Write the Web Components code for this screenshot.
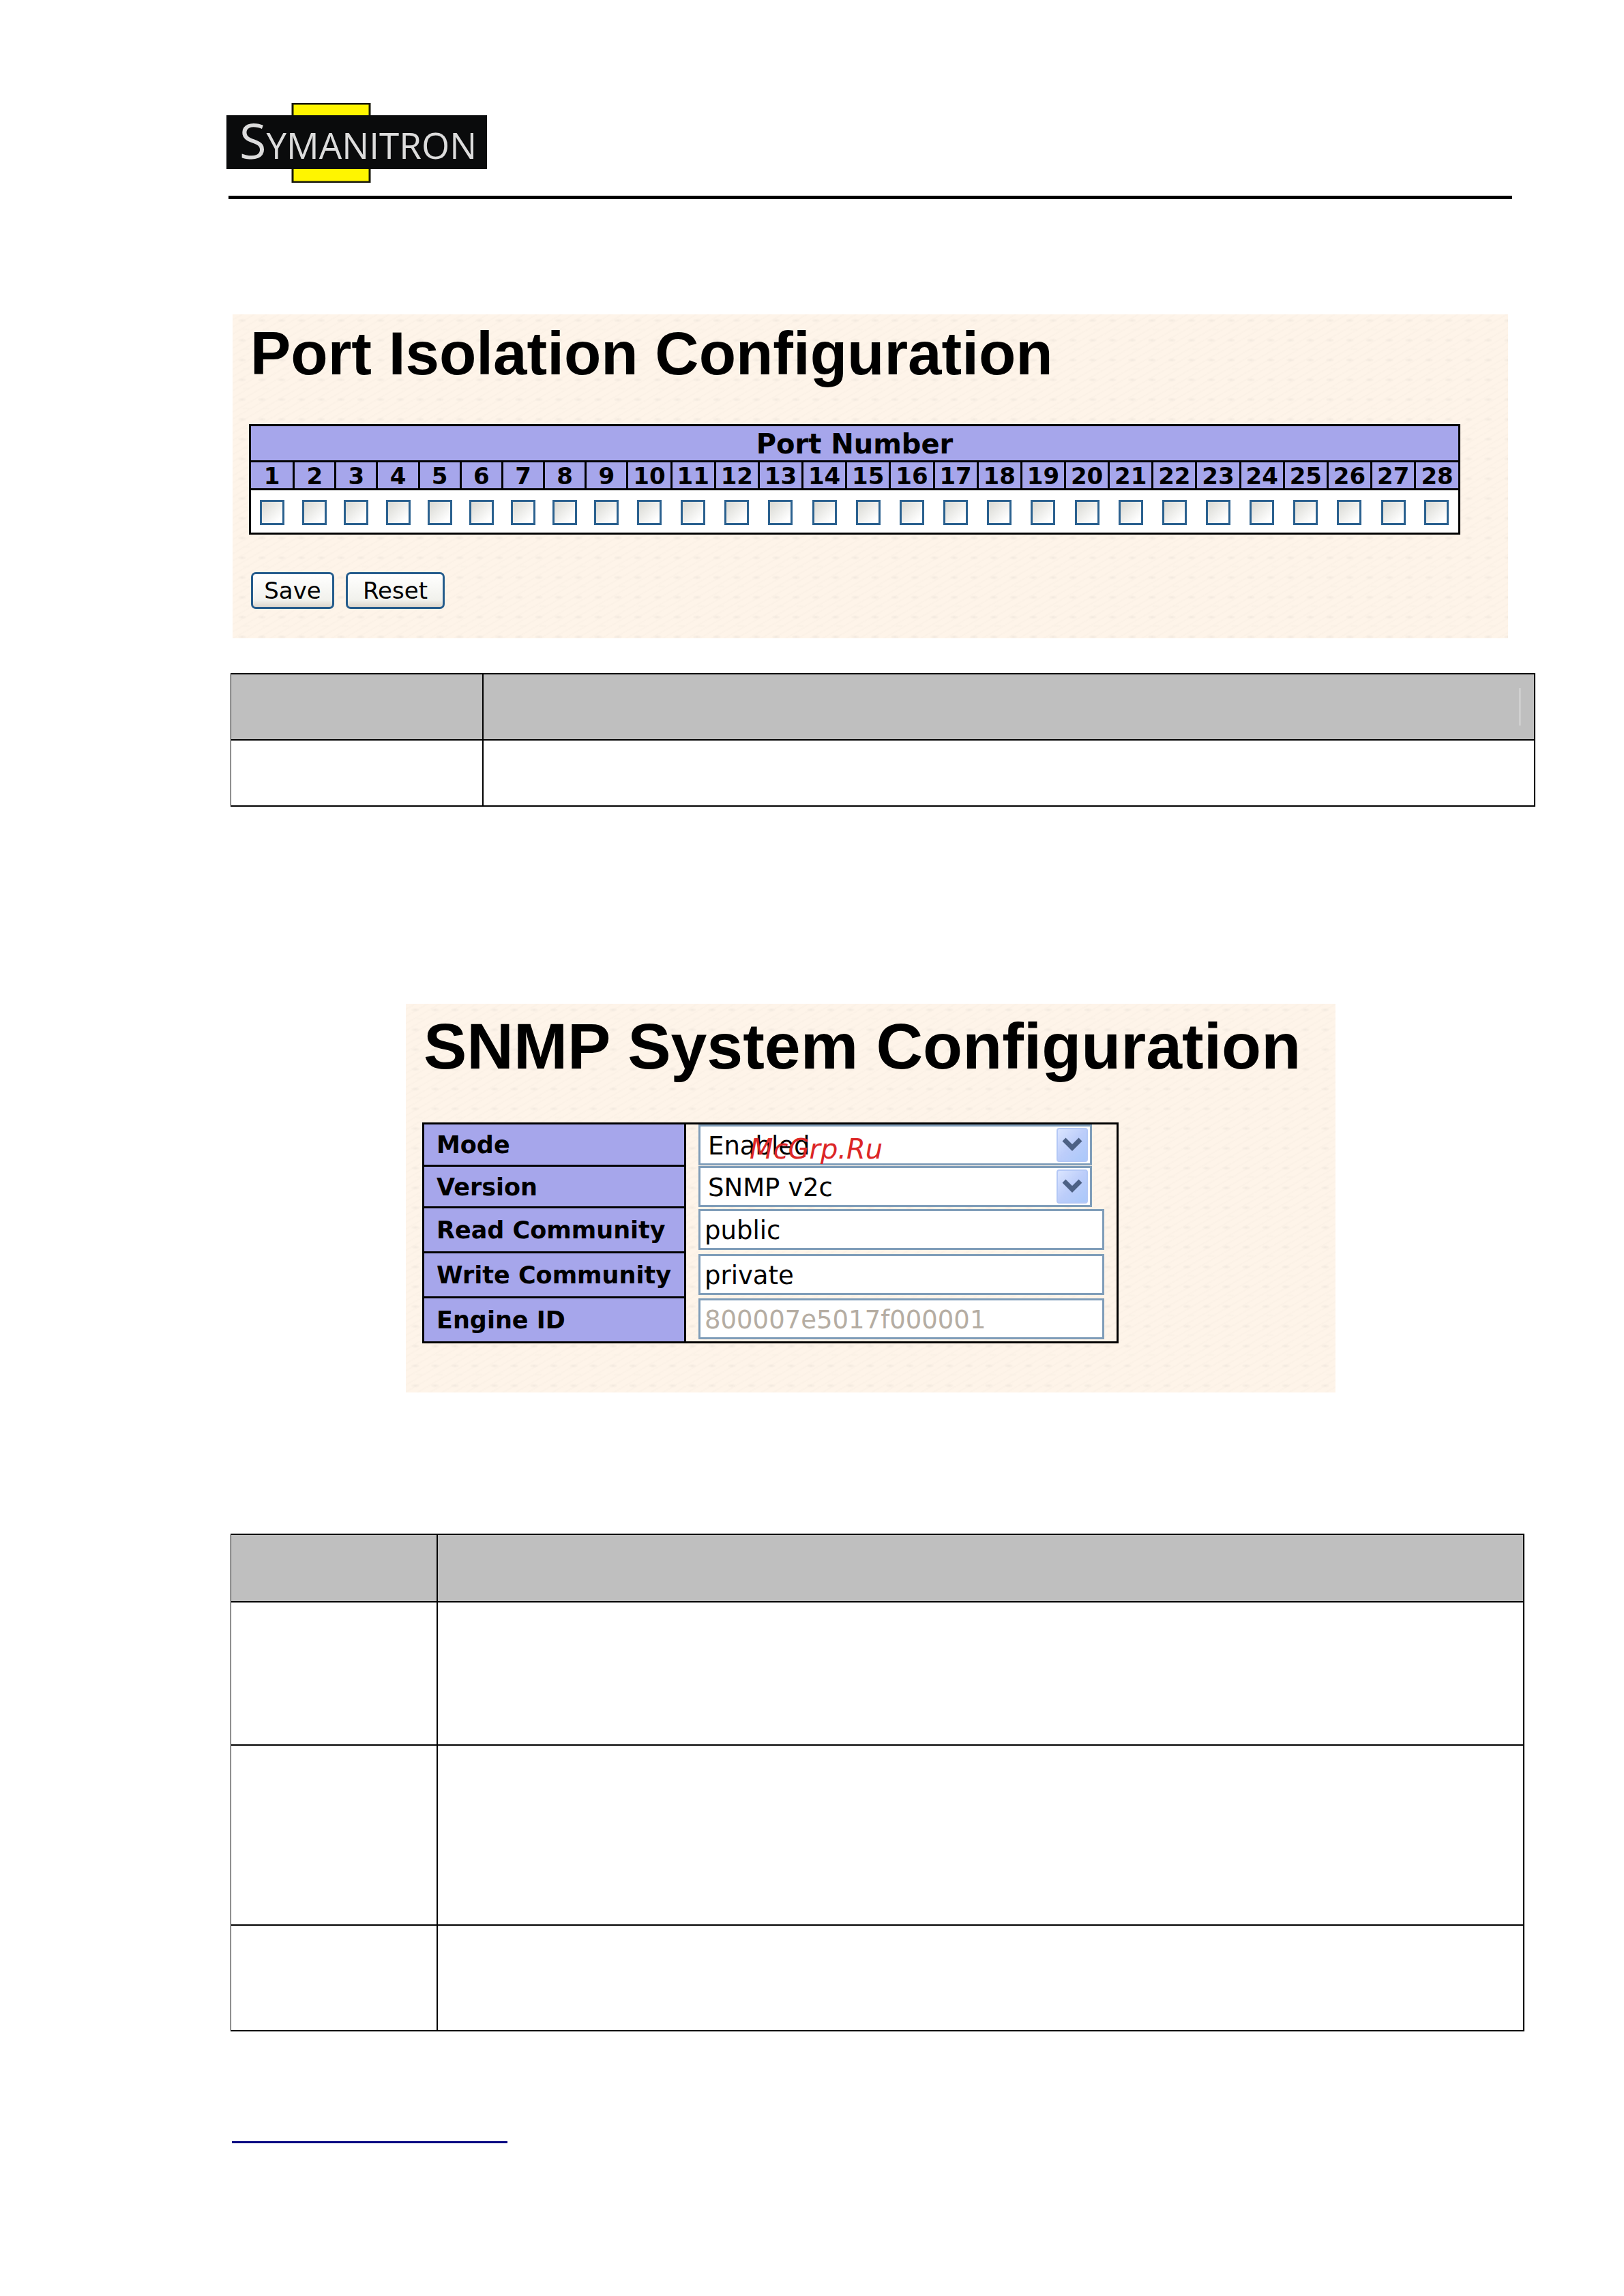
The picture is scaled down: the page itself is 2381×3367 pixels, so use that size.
<!DOCTYPE html>
<html lang="en">
<head>
<meta charset="utf-8">
<title>Port Isolation and SNMP System Configuration</title>
<style>
  body {
    margin: 0;
    background: #fff;
    color: #000;
    font-family: Verdana, "DejaVu Sans", sans-serif;
  }
</style>
</head>
<body>
<manual-page>
  <brand-logo slot="header"></brand-logo>

  <config-panel heading="Port Isolation Configuration">
    <port-table ports="28"></port-table>
    <panel-actions>
      <push-button>Save</push-button>
      <push-button data-wide>Reset</push-button>
    </panel-actions>
  </config-panel>

  <description-table rows="97,97" label-width="369" data-wide data-caret></description-table>

  <config-panel heading="SNMP System Configuration" data-centered>
    <snmp-form></snmp-form>
    <water-mark>McGrp.Ru</water-mark>
  </config-panel>

  <description-table rows="99,210,264,155" label-width="302"></description-table>

  <footer-link slot="footer"></footer-link>
</manual-page>

<script>
class ManualPage extends HTMLElement {
  constructor() {
    super()
    this.attachShadow({ mode: 'open' })
  }

  connectedCallback() {
    this.shadowRoot.innerHTML = `
      <style>
        :host {
          box-sizing: border-box;
          display: flex;
          flex-direction: column;
          min-height: 100vh;
          padding: 151px 166px 224px 338px;
        }

        header {
          border-bottom: 5px solid #000;
          margin: 0 -2px 169px -3px;
          padding-bottom: 19px;
        }

        main {
          display: flex;
          flex-direction: column;
        }

        footer {
          display: flex;
          margin-top: 126px;
        }
      </style>
      <header><slot name="header"></slot></header>
      <main><slot></slot></main>
      <footer><slot name="footer"></slot></footer>
    `
  }
}

class BrandLogo extends HTMLElement {
  constructor() {
    super()
    this.attachShadow({ mode: 'open' })
  }

  connectedCallback() {
    this.shadowRoot.innerHTML = `
      <style>
        :host {
          display: block;
          height: 117px;
          margin-left: -4px;
        }

        svg {
          display: block;
        }

        text {
          fill: #dcdcdc;
          font-family: "Open Sans", sans-serif;
          font-size: 53px;
        }

        .initial {
          font-size: 72px;
        }
      </style>
      <svg width="384" height="117" viewBox="0 0 384 117" role="img" aria-label="Symanitron">
        <rect x="98" y="1" width="113" height="115" fill="#fff500" stroke="#17170a" stroke-width="3"/>
        <rect x="1" y="18" width="382" height="79" fill="#0a0b0c"/>
        <text x="20" y="82"><tspan class="initial">S</tspan>YMANITRON</text>
      </svg>
    `
  }
}

class ConfigPanel extends HTMLElement {
  constructor() {
    super()
    this.attachShadow({ mode: 'open' })
  }

  connectedCallback() {
    this.shadowRoot.innerHTML = `
      <style>
        :host {
          position: relative;
          box-sizing: border-box;
          display: block;
          margin: 0 4px 51px 3px;
          padding: 7px 70px 43px 24px;
          background-color: #fef4e9;
          background-image:
            radial-gradient(ellipse 7px 3px at 14px 9px, #f2e9df, transparent),
            radial-gradient(ellipse 8px 2px at 20px 22px, #f9f0e5, transparent),
            repeating-linear-gradient(150deg, transparent 0 5px, #fbf1e6 7px, transparent 9px);
          background-size: 29px 29px, 29px 29px, auto;
        }

        :host([data-centered]) {
          align-self: center;
          width: 1363px;
          max-width: 100%;
          margin: 289px 0 207px;
          padding: 8px 24px 72px;
        }

        h1 {
          margin: 0 0 54px 2px;
          font: bold 89px/100px Arial, "Liberation Sans", sans-serif;
          white-space: nowrap;
        }

        :host([data-centered]) h1 {
          margin-bottom: 58px;
          font-size: 95px;
          line-height: 108px;
        }
      </style>
      <h1>${this.getAttribute('heading')}</h1>
      <slot></slot>
    `
  }
}

class PortTable extends HTMLElement {
  constructor() {
    super()
    this.attachShadow({ mode: 'open' })
  }

  _ports() {
    const count = Number(this.getAttribute('ports'))
    return Array.from({ length: count }, (_, i) => i + 1)
  }

  connectedCallback() {
    const ports = this._ports()

    this.shadowRoot.innerHTML = `
      <style>
        :host {
          display: block;
        }

        table {
          width: 100%;
          table-layout: fixed;
          border: 3px solid #000;
          border-collapse: collapse;
        }

        .port {
          width: 64px;
        }

        .port.narrow {
          width: 61px;
        }

        th, td {
          padding: 2px 0 0;
          text-align: center;
        }

        th {
          border: 3px solid #000;
          background: #a6a6eb;
          font-size: 34px;
          line-height: 36px;
        }

        .title th {
          height: 48px;
          font-size: 40px;
        }

        td {
          height: 60px;
          background: #fff;
        }

        input {
          appearance: none;
          box-sizing: border-box;
          display: block;
          width: 36px;
          height: 37px;
          margin: 0 auto;
          border: 3px solid #2b618f;
          border-radius: 0;
          background: linear-gradient(135deg, #d8d8d2, #fff 85%);
        }
      </style>
      <table>
        <colgroup>
          ${ports.map(port => `<col class="port ${port > 1 && port < 10 ? 'narrow' : ''}">`).join('')}
        </colgroup>
        <thead>
          <tr class="title"><th colspan="${ports.length}">Port Number</th></tr>
          <tr>${ports.map(port => `<th id="port-${port}">${port}</th>`).join('')}</tr>
        </thead>
        <tbody>
          <tr>
            ${ports.map(port => `<td><input type="checkbox" aria-labelledby="port-${port}"></td>`).join('')}
          </tr>
        </tbody>
      </table>
    `
  }
}

class PanelActions extends HTMLElement {
  constructor() {
    super()
    this.attachShadow({ mode: 'open' })
  }

  connectedCallback() {
    this.shadowRoot.innerHTML = `
      <style>
        :host {
          display: flex;
          gap: 17px;
          margin-top: 55px;
          padding-left: 3px;
        }
      </style>
      <slot></slot>
    `
  }
}

class PushButton extends HTMLElement {
  constructor() {
    super()
    this.attachShadow({ mode: 'open' })
  }

  connectedCallback() {
    this.shadowRoot.innerHTML = `
      <style>
        :host {
          display: block;
        }

        button {
          box-sizing: border-box;
          min-width: 122px;
          height: 54px;
          padding: 0 15px;
          border: 3px solid #255c8c;
          border-radius: 7px;
          background: linear-gradient(#fff, #f1f1ec 80%, #dcd6cc);
          color: #000;
          font: 34px/40px Verdana, "DejaVu Sans", sans-serif;
          display: block;
        }

        :host([data-wide]) button {
          min-width: 145px;
        }
      </style>
      <button type="button"><slot></slot></button>
    `
  }
}

class DescriptionTable extends HTMLElement {
  constructor() {
    super()
    this.attachShadow({ mode: 'open' })
  }

  connectedCallback() {
    const [head, ...body] = this.getAttribute('rows').split(',')
    const caret = this.hasAttribute('data-caret') ? '<span class="caret"></span>' : ''

    this.shadowRoot.innerHTML = `
      <style>
        :host {
          display: block;
          margin-right: -20px;
        }

        :host([data-wide]) {
          margin-right: -36px;
        }

        table {
          width: 100%;
          table-layout: fixed;
          border-collapse: collapse;
        }

        th, td {
          box-sizing: border-box;
          padding: 0;
          border: 2px solid #000;
        }

        th {
          background: #bfbfbf;
        }

        th:first-child, td:first-child {
          border-left-width: 1px;
        }

        .label {
          width: ${this.getAttribute('label-width')}px;
        }

        .caret {
          display: block;
          width: 1px;
          height: 55px;
          margin: 0 20px 0 auto;
          background: #fff;
        }
      </style>
      <table>
        <colgroup><col class="label"><col></colgroup>
        <thead>
          <tr style="height: ${head}px"><th></th><th>${caret}</th></tr>
        </thead>
        <tbody>
          ${body.map(height => `<tr style="height: ${height}px"><td></td><td></td></tr>`).join('')}
        </tbody>
      </table>
    `
  }
}

class SnmpForm extends HTMLElement {
  constructor() {
    super()
    this.attachShadow({ mode: 'open' })

    this.fields = [
      { id: 'mode', label: 'Mode', options: ['Enabled', 'Disabled'] },
      { id: 'version', label: 'Version', options: ['SNMP v2c', 'SNMP v1', 'SNMP v3'] },
      { id: 'read', label: 'Read Community', value: 'public' },
      { id: 'write', label: 'Write Community', value: 'private' },
      { id: 'engine', label: 'Engine ID', value: '800007e5017f000001', disabled: true }
    ]
  }

  _renderControl({ id, options, value, disabled }) {
    if (!options) {
      return `<input id="${id}" type="text" value="${value}" ${disabled ? 'disabled' : ''}>`
    }

    return `
      <div class="dropdown">
        <select id="${id}">${options.map(option => `<option>${option}</option>`).join('')}</select>
        <svg width="46" height="50" viewBox="0 0 46 50" aria-hidden="true">
          <defs>
            <linearGradient id="face-${id}" x1="0" y1="0" x2="1" y2="1">
              <stop offset="0" stop-color="#dce6ff"/>
              <stop offset=".5" stop-color="#bccdfa"/>
              <stop offset="1" stop-color="#a9c8fa"/>
            </linearGradient>
          </defs>
          <rect x="1" y="1" width="44" height="48" rx="3" fill="url(#face-${id})" stroke="#b4c8f6" stroke-width="2"/>
          <path d="M11 17L23 29L35 17" fill="none" stroke="#4d6185" stroke-width="7"/>
        </svg>
      </div>
    `
  }

  connectedCallback() {
    this.shadowRoot.innerHTML = `
      <style>
        :host {
          display: block;
          width: 1021px;
        }

        table {
          width: 100%;
          table-layout: fixed;
          border: 3px solid #000;
          border-collapse: collapse;
        }

        .label {
          width: 384px;
        }

        tr {
          height: 66px;
        }

        tr:nth-child(-n + 2) {
          height: 61px;
        }

        th {
          padding: 2px 0 0 18px;
          border: 3px solid #000;
          background: #a6a6eb;
          font-size: 35px;
          line-height: 40px;
          text-align: left;
          white-space: nowrap;
        }

        td {
          padding: 0 18px;
        }

        .dropdown {
          display: grid;
          width: 577px;
          align-items: center;
        }

        .dropdown > * {
          grid-area: 1 / 1;
        }

        svg {
          justify-self: end;
          margin-right: 6px;
          pointer-events: none;
        }

        select, input {
          appearance: none;
          box-sizing: border-box;
          display: block;
          width: 100%;
          height: 60px;
          margin: 0;
          border: 3px solid #7f9db9;
          border-radius: 0;
          background: #fff;
          color: #000;
          font-family: Verdana, "DejaVu Sans", sans-serif;
          font-size: 37px;
        }

        select {
          padding: 3px 60px 0 11px;
        }

        input {
          padding: 2px 6px 0;
        }

        input:disabled {
          color: #b5ada3;
        }
      </style>
      <table>
        <colgroup><col class="label"><col></colgroup>
        <tbody>
          ${this.fields.map(field => `
            <tr>
              <th scope="row"><label for="${field.id}">${field.label}</label></th>
              <td>${this._renderControl(field)}</td>
            </tr>
          `).join('')}
        </tbody>
      </table>
    `
  }
}

class WaterMark extends HTMLElement {
  constructor() {
    super()
    this.attachShadow({ mode: 'open' })
  }

  connectedCallback() {
    this.shadowRoot.innerHTML = `
      <style>
        /* stamped over the form */
        :host {
          position: absolute;
          left: 504px;
          top: 193px;
          color: #dc2626;
          font: italic 40px/40px Verdana, "DejaVu Sans", sans-serif;
          pointer-events: none;
        }
      </style>
      <slot></slot>
    `
  }
}

class FooterLink extends HTMLElement {
  constructor() {
    super()
    this.attachShadow({ mode: 'open' })
  }

  connectedCallback() {
    this.shadowRoot.innerHTML = `
      <style>
        :host {
          display: block;
          margin-left: 2px;
        }

        a {
          display: block;
          width: 404px;
          height: 35px;
          border-bottom: 3px solid #000080;
        }
      </style>
      <a href="#" aria-label="Website"></a>
    `
  }
}

customElements.define('manual-page', ManualPage)
customElements.define('brand-logo', BrandLogo)
customElements.define('config-panel', ConfigPanel)
customElements.define('port-table', PortTable)
customElements.define('panel-actions', PanelActions)
customElements.define('push-button', PushButton)
customElements.define('description-table', DescriptionTable)
customElements.define('snmp-form', SnmpForm)
customElements.define('water-mark', WaterMark)
customElements.define('footer-link', FooterLink)
</script>
</body>
</html>
